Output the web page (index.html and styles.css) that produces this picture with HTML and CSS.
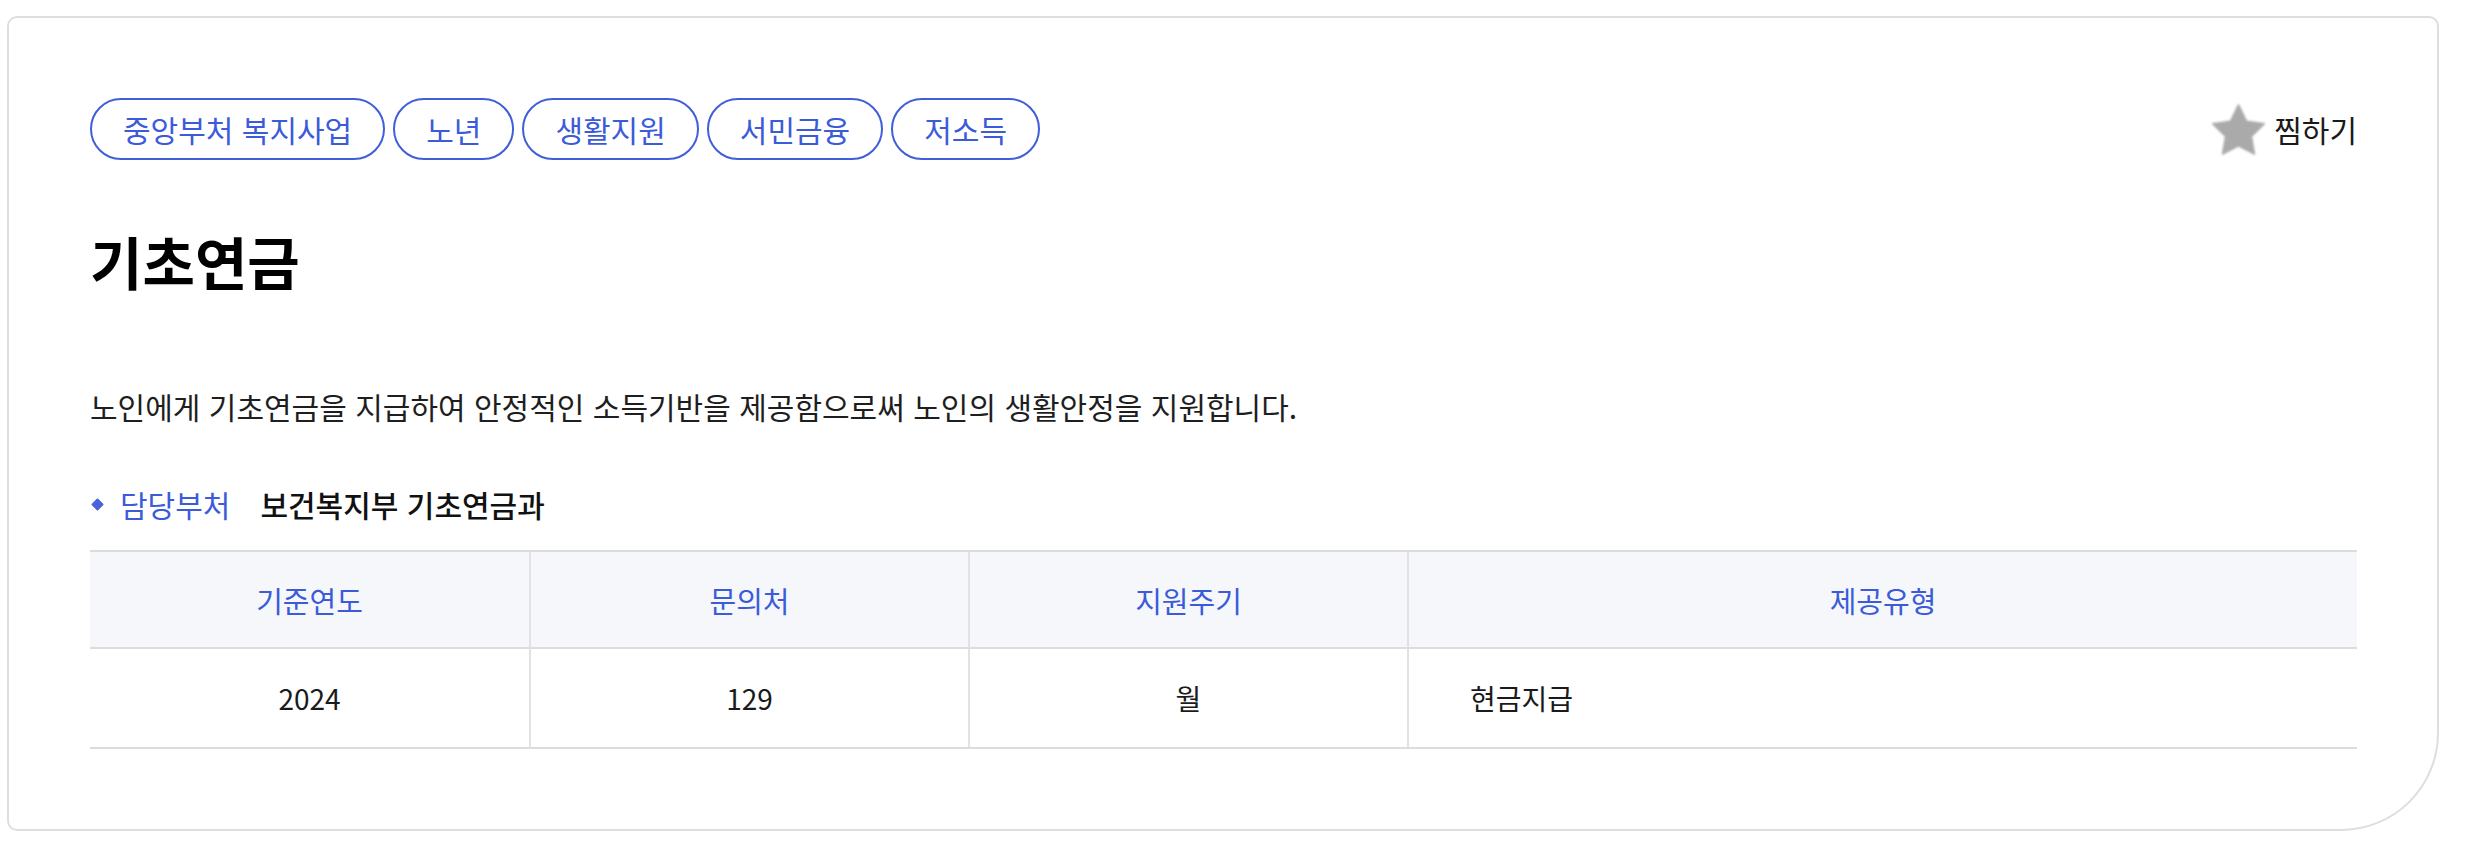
FILE: index.html
```html
<!DOCTYPE html>
<html lang="ko">
<head>
<meta charset="utf-8">
<title>기초연금</title>
<link rel="stylesheet" href="styles.css">
</head>
<body>
<div class="card">
  <div class="top">
    <ul class="tags">
      <li class="tag">중앙부처 복지사업</li>
      <li class="tag">노년</li>
      <li class="tag">생활지원</li>
      <li class="tag">서민금융</li>
      <li class="tag">저소득</li>
    </ul>
    <button class="fav" type="button">
      <svg class="star" viewBox="2.1 1.9 19.8 19" width="53" height="53" aria-hidden="true">
        <path d="M12 2.2l2.95 6.1 6.7.95-4.85 4.7 1.15 6.65L12 17.45 6.05 20.6l1.15-6.65L2.35 9.25l6.7-.95z" fill="#aaaaaa" stroke="#aaaaaa" stroke-width="0.6" stroke-linejoin="round"/>
      </svg>
      <span class="fav-text">찜하기</span>
    </button>
  </div>
  <h1 class="title">기초연금</h1>
  <p class="desc">노인에게 기초연금을 지급하여 안정적인 소득기반을 제공함으로써 노인의 생활안정을 지원합니다.</p>
  <div class="dept">
    <span class="dot"></span>
    <span class="dept-label">담당부처</span>
    <span class="dept-value">보건복지부 기초연금과</span>
  </div>
  <div class="table">
    <div class="th">기준연도</div>
    <div class="th sep">문의처</div>
    <div class="th sep">지원주기</div>
    <div class="th sep">제공유형</div>
    <div class="td">2024</div>
    <div class="td sep">129</div>
    <div class="td sep">월</div>
    <div class="td sep left">현금지급</div>
  </div>
</div>
</body>
</html>
```
FILE: styles.css
```css
* { box-sizing: border-box; }
html, body { margin: 0; padding: 0; background: #ffffff; }
body {
  font-family: "Noto Sans CJK KR", "Noto Sans", sans-serif;
  color: #222;
  padding: 16px 0 0 7px;
}
.card {
  width: 2432px;
  border: 2px solid #dedede;
  border-radius: 10px 10px 98px 10px;
  padding: 80px 80px 80px 81px;
  background: #fff;
}
.top {
  display: flex;
  justify-content: space-between;
  align-items: center;
}
.tags {
  list-style: none;
  margin: 0;
  padding: 0;
  display: flex;
  gap: 8px;
}
.tag {
  font-size: 30px;
  line-height: 40px;
  padding: 9px 31px;
  border: 2px solid #3f5ed8;
  border-radius: 999px;
  color: #3b5bd9;
  white-space: nowrap;
}
.fav {
  display: flex;
  align-items: center;
  gap: 9px;
  background: none;
  border: 0;
  padding: 0;
  font-family: inherit;
  cursor: pointer;
}
.star { display: block; filter: blur(0.8px); }
.fav-text {
  font-size: 30px;
  line-height: 40px;
  color: #1a1a1a;
}
.title {
  margin: 62px 0 0;
  font-size: 57px;
  line-height: 76px;
  font-weight: 700;
  color: #000;
}
.desc {
  margin: 88px 0 0;
  font-size: 30px;
  line-height: 40px;
  color: #1e1e1e;
}
.dept {
  margin-top: 58px;
  display: flex;
  align-items: center;
  font-size: 30px;
  line-height: 40px;
}
.dot {
  width: 9px;
  height: 9px;
  background: #4a63d9;
  transform: rotate(45deg);
  margin: 0 0 0 3px;
  border-radius: 1px;
}
.dept-label {
  color: #3b5bd9;
  margin-left: 18px;
}
.dept-value {
  margin-left: 30px;
  color: #111;
  font-weight: 500;
}
.table {
  margin-top: 26px;
  display: grid;
  grid-template-columns: 439px 439px 439px 1fr;
  border-top: 2px solid #dcdcdf;
  border-bottom: 2px solid #dcdcdf;
}
.th {
  height: 97px;
  background: #f5f7fb;
  border-bottom: 2px solid #dcdcdf;
  display: flex;
  align-items: center;
  justify-content: center;
  font-size: 29px;
  color: #3b5bd9;
}
.td {
  height: 98px;
  display: flex;
  align-items: center;
  justify-content: center;
  font-size: 28px;
  color: #1a1a1a;
}
.sep { border-left: 2px solid #e2e2e4; }
.td.left { justify-content: flex-start; padding-left: 61px; }
```
